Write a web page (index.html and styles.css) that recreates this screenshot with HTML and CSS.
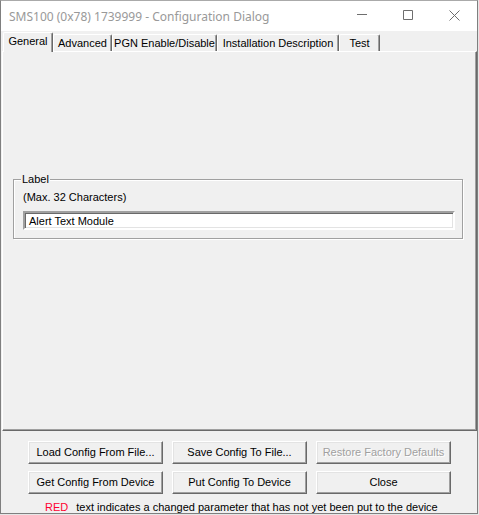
FILE: index.html
```
<!DOCTYPE html>
<html>

<head>
  <title>Configuration Dialog</title>
  <meta charset="UTF-8">
  <link rel="stylesheet" href="styles.css">
</head>

<body>
  <div class="window">
    <div class="titlebar">
      <span class="title">SMS100 (0x78) 1739999 - Configuration Dialog</span>
      <div class="caption-btn">
        <svg width="10" height="10" viewBox="0 0 10 10"><path d="M0 4.5H10" /></svg>
      </div>
      <div class="caption-btn">
        <svg width="10" height="10" viewBox="0 0 10 10"><path d="M0.5 0.5H9.5V9.5H0.5Z" /></svg>
      </div>
      <div class="caption-btn">
        <svg width="11" height="11" viewBox="0 0 11 11"><path d="M0.5 0.5L10.5 10.5M10.5 0.5L0.5 10.5" /></svg>
      </div>
    </div>

    <div class="tabs">
      <div class="tab selected" style="width:50px">General</div>
      <div class="tab" style="width:59px">Advanced</div>
      <div class="tab" style="width:105px">PGN Enable/Disable</div>
      <div class="tab" style="width:122px">Installation Description</div>
      <div class="tab" style="width:41px">Test</div>
    </div>

    <div class="panel">
      <fieldset class="group">
        <legend>Label</legend>
        <div class="hint">(Max. 32 Characters)</div>
        <div class="edit">Alert Text Module</div>
      </fieldset>
    </div>

    <div class="footer">
      <div class="buttons">
        <div class="button">Load Config From File...</div>
        <div class="button">Save Config To File...</div>
        <div class="button disabled">Restore Factory Defaults</div>
        <div class="button">Get Config From Device</div>
        <div class="button">Put Config To Device</div>
        <div class="button">Close</div>
      </div>
      <div class="note"><span class="red">RED</span> text indicates a changed parameter that has not yet been put to the device</div>
    </div>
  </div>
</body>
</html>
```

FILE: styles.css
```
*{
  box-sizing:border-box;
}

html,
body{
  margin:0;
  height:100%;
}

body{
  background:#e6e6e6;
  font-family:"Liberation Sans", Arial, sans-serif;
  font-size:11px;
  color:#000;
}

.window{
  width:478px;
  height:514px;
  border:1px solid #7f7f7f;
  border-top-color:#aaaaaa;
  background:#f0f0f0;
  display:flex;
  flex-direction:column;
}

/* title bar */
.titlebar{
  height:30px;
  flex:none;
  background:#fff;
  display:flex;
  align-items:center;
}
.title{
  flex:1;
  padding-left:8px;
  font-family:"Noto Sans", sans-serif;
  font-size:12px;
  color:#999;
  white-space:nowrap;
}
.caption-btn{
  width:46px;
  height:30px;
  display:flex;
  align-items:center;
  justify-content:center;
}
.caption-btn svg{
  fill:none;
  stroke:#6e6e6e;
  stroke-width:1;
  margin-top:-2px;
}

/* tabs */
.tabs{
  flex:none;
  height:21px;
  margin-bottom:-1px;
  padding:1px 0 0 2px;
  display:flex;
  align-items:flex-end;
  position:relative;
  z-index:1;
}
.tab{
  height:17px;
  margin-bottom:1px;
  padding-top:2px;
  line-height:13px;
  text-align:center;
  white-space:nowrap;
  border-top:1px solid #fff;
  border-left:1px solid #fff;
  border-right:1px solid #696969;
  border-radius:2px 2px 0 0;
  box-shadow:inset -1px 0 #a0a0a0;
  background:#f0f0f0;
}
.tab.selected{
  height:20px;
  margin-bottom:0;
}

/* tab page */
.panel{
  flex:none;
  height:380px;
  margin-left:1px;
  padding:121px 13px 0 10px;
  border:1px solid;
  border-color:#fff #696969 #696969 #fff;
  box-shadow:inset -1px -1px #a0a0a0;
}

.group{
  margin:0;
  padding:5px 7px 8px 9px;
  border:1px solid #a0a0a0;
  box-shadow:inset 1px 1px #fff, 1px 1px #fff;
  min-width:0;
}
.group legend{
  padding:0 1px;
  margin-left:-2px;
  line-height:13px;
  background:#f0f0f0;
}
.hint{
  line-height:13px;
}
.edit{
  margin-top:7px;
  height:19px;
  padding:2px 0 0 4px;
  line-height:13px;
  background:#fff;
  border:2px solid;
  border-color:#a0a0a0 #fff #fff #a0a0a0;
  box-shadow:inset 1px 1px #696969, inset -1px -1px #e3e3e3;
  white-space:nowrap;
}

/* bottom area */
.footer{
  flex:1;
  padding:10px 0 0 27px;
}
.buttons{
  display:grid;
  grid-template-columns:135px 135px 135px;
  grid-auto-rows:23px;
  column-gap:9px;
  row-gap:7px;
}
.button{
  display:flex;
  align-items:center;
  justify-content:center;
  line-height:13px;
  border:1px solid;
  border-color:#fff #696969 #696969 #fff;
  box-shadow:inset -1px -1px #a0a0a0, inset 1px 1px #e3e3e3;
  white-space:nowrap;
}
.button.disabled{
  color:#a0a0a0;
  text-shadow:1px 1px #fff;
}
.note{
  margin-top:7px;
  padding-left:17px;
  line-height:12px;
  white-space:nowrap;
}
.red{
  color:#ff0030;
  margin-right:5px;
}
```
